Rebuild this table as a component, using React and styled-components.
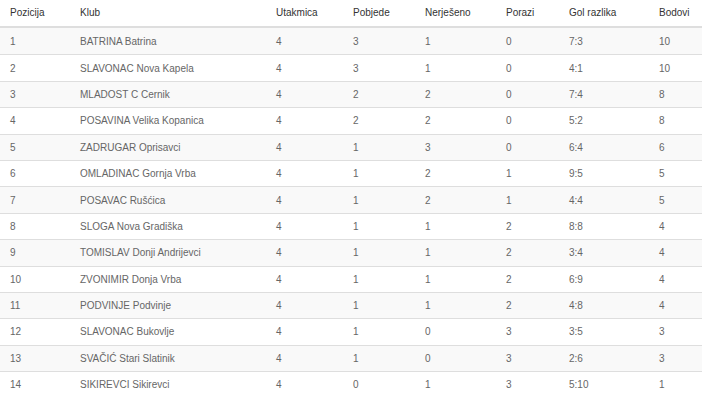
import React from "react";
import styled, { createGlobalStyle } from "styled-components";

const Global = createGlobalStyle`
  html, body { margin: 0; padding: 0; background: #fff; }
  body { font-family: "Liberation Sans", Arial, sans-serif; }
`;

const cols = "72px 196px 77px 72px 81px 63px 90px 51px";

const Table = styled.div`
  width: 702px;
  font-size: 10px;
  color: #666;
`;

const HeadRow = styled.div`
  display: grid;
  grid-template-columns: ${cols};
  height: 28px;
  box-sizing: border-box;
  border-bottom: 2px solid #dedede;
  align-items: center;
  color: #333;
  padding-bottom: 1px;
`;

const Row = styled.div`
  display: grid;
  grid-template-columns: ${cols};
  height: 26.4px;
  box-sizing: border-box;
  border-top: ${(p) => (p.$first ? "none" : "1px solid #dedede")};
  background: ${(p) => (p.$striped ? "#f9f9f9" : "#fff")};
  align-items: center;
`;

const Cell = styled.div`
  padding-left: ${(p) => (p.$first ? "10px" : "8px")};
  white-space: nowrap;
`;

const headers = ["Pozicija", "Klub", "Utakmica", "Pobjede", "Nerješeno", "Porazi", "Gol razlika", "Bodovi"];

const rows = [
  [1, "BATRINA Batrina", 4, 3, 1, 0, "7:3", 10],
  [2, "SLAVONAC Nova Kapela", 4, 3, 1, 0, "4:1", 10],
  [3, "MLADOST C Cernik", 4, 2, 2, 0, "7:4", 8],
  [4, "POSAVINA Velika Kopanica", 4, 2, 2, 0, "5:2", 8],
  [5, "ZADRUGAR Oprisavci", 4, 1, 3, 0, "6:4", 6],
  [6, "OMLADINAC Gornja Vrba", 4, 1, 2, 1, "9:5", 5],
  [7, "POSAVAC Rušćica", 4, 1, 2, 1, "4:4", 5],
  [8, "SLOGA Nova Gradiška", 4, 1, 1, 2, "8:8", 4],
  [9, "TOMISLAV Donji Andrijevci", 4, 1, 1, 2, "3:4", 4],
  [10, "ZVONIMIR Donja Vrba", 4, 1, 1, 2, "6:9", 4],
  [11, "PODVINJE Podvinje", 4, 1, 1, 2, "4:8", 4],
  [12, "SLAVONAC Bukovlje", 4, 1, 0, 3, "3:5", 3],
  [13, "SVAČIĆ Stari Slatinik", 4, 1, 0, 3, "2:6", 3],
  [14, "SIKIREVCI Sikirevci", 4, 0, 1, 3, "5:10", 1],
];

export default function App() {
  return (
    <>
      <Global />
      <Table>
        <HeadRow>
          {headers.map((h, i) => (
            <Cell key={h} $first={i === 0}>{h}</Cell>
          ))}
        </HeadRow>
        {rows.map((r, ri) => (
          <Row key={ri} $first={ri === 0} $striped={ri % 2 === 0}>
            {r.map((v, i) => (
              <Cell key={i} $first={i === 0}>{v}</Cell>
            ))}
          </Row>
        ))}
      </Table>
    </>
  );
}
